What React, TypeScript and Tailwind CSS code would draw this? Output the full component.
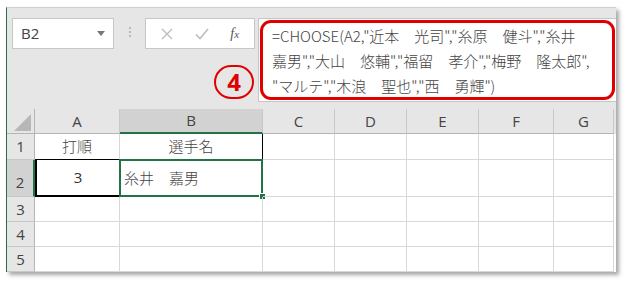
import React from "react";

const cols = ["A", "B", "C", "D", "E", "F", "G"];
const colW = ["w-[85px]", "w-[143px]", "w-[72px]", "w-[72px]", "w-[72px]", "w-[75px]", "w-[60px]"];

const jp = { fontFamily: '"Noto Sans CJK JP", "Noto Sans", sans-serif' };
const ui = { fontFamily: '"Open Sans", "Noto Sans", sans-serif' };

const NameBox = () => (
  <div className="flex items-center justify-between w-[102px] h-[31px] bg-white border border-[#c6c6c6] pl-[8px] pr-[8px]">
    <span className="text-[15px] text-[#444]" style={ui}>B2</span>
    <svg width="8" height="5" viewBox="0 0 8 5"><path d="M0 0h8L4 5z" fill="#777" /></svg>
  </div>
);

const FxBox = () => (
  <div className="flex items-center justify-around w-[110px] h-[31px] bg-white border border-[#c6c6c6] px-[4px]">
    <svg width="12" height="12" viewBox="0 0 12 12"><path d="M1 1l10 10M11 1L1 11" stroke="#bdbdbd" strokeWidth="1.4" /></svg>
    <svg width="14" height="12" viewBox="0 0 14 12"><path d="M1 6.5l4 4L13 1" stroke="#bdbdbd" strokeWidth="1.6" fill="none" /></svg>
    <span className="text-[14px] italic text-[#555]" style={{ fontFamily: '"Liberation Serif", serif' }}>
      f<span className="text-[11px]">x</span>
    </span>
  </div>
);

const Cell = ({ className = "", children }: { className?: string; children?: React.ReactNode }) => (
  <div className={`relative flex items-center border-r border-b border-[#d8d8d8] ${className}`}>{children}</div>
);

export default function App() {
  const rowH = ["h-[26px]", "h-[37px]", "h-[25px]", "h-[25px]", "h-[25px]"];
  return (
    <div className="w-[625px] h-[284px] bg-white pl-[6px] pt-[7px]">
      <div className="w-[610px] h-[265px] bg-[#e6e6e6] border-l border-l-[#2e6b46] border-t border-t-[#d0d0d0] shadow-[3px_3px_4px_rgba(0,0,0,0.35)] flex flex-col">
        {/* formula bar */}
        <div className="flex h-[100px] pt-[10px] pl-[5px]">
          <NameBox />
          <div className="w-[31px] flex justify-center pt-[9px]">
            <div className="flex flex-col gap-[2px]">
              <span className="w-[2px] h-[2px] bg-[#b8b8b8]" />
              <span className="w-[2px] h-[2px] bg-[#b8b8b8]" />
              <span className="w-[2px] h-[2px] bg-[#b8b8b8]" />
            </div>
          </div>
          <div className="flex flex-col items-end">
            <FxBox />
            <div className="mt-[16px] mr-[1px] w-[40px] h-[34px] rounded-full border-[2.5px] border-[#e00000] flex items-center justify-center text-[#e00000] text-[24px] font-bold leading-none" style={ui}>
              4
            </div>
          </div>
          <div className="ml-[3px] w-[358px] h-[84px] bg-white border border-[#c6c6c6] border-r-0 p-[1px]">
            <div className="h-full rounded-[11px] border-[3px] border-[#e00000] pl-[9px] pt-0 text-[15px] leading-[25px] text-[#444] font-light whitespace-nowrap" style={jp}>
              <div>=CHOOSE(A2,"近本　光司","糸原　健斗","糸井</div>
              <div>嘉男","大山　悠輔","福留　孝介","梅野　隆太郎",</div>
              <div>"マルテ","木浪　聖也","西　勇輝")</div>
            </div>
          </div>
        </div>

        {/* grid */}
        <div className="mt-[1px] flex flex-col text-[#444]" style={ui}>
          <div className="flex h-[25px] bg-[#e6e6e6]">
            <div className="w-[28px] border-r border-b border-[#b5b5b5] flex items-end justify-end pr-[3px] pb-[2px]">
              <svg width="17" height="17" viewBox="0 0 17 17"><path d="M17 0V17H0z" fill="#b7b7b7" /></svg>
            </div>
            {cols.map((c, i) => (
              <div
                key={c}
                className={`${colW[i]} flex items-center justify-center text-[15px] border-r border-[#c8c8c8] ${
                  c === "B" ? "bg-[#d2d2d2] border-b-2 border-b-[#217346]" : "border-b border-b-[#b5b5b5]"
                }`}
              >
                {c}
              </div>
            ))}
          </div>
          {rowH.map((h, r) => (
            <div key={r} className={`flex ${h} bg-white`}>
              <div
                className={`w-[28px] flex items-center justify-center text-[15px] border-b border-[#c8c8c8] ${
                  r === 1 ? "bg-[#d2d2d2] border-r-2 border-r-[#217346] items-end pb-[3px]" : "bg-[#e6e6e6] border-r border-r-[#b5b5b5]"
                }`}
              >
                {r + 1}
              </div>
              {cols.map((c, i) => {
                let cls = `${colW[i]} `;
                let content: React.ReactNode = null;
                if (r === 0 && c === "A") {
                  cls += "justify-center !border-b-black";
                  content = <span className="text-[15px] text-[#444] font-light" style={jp}>打順</span>;
                } else if (r === 0 && c === "B") {
                  cls += "justify-center !border-b-black !border-r-black";
                  content = <span className="text-[15px] text-[#444] font-light" style={jp}>選手名</span>;
                } else if (r === 1 && c === "A") {
                  cls += "justify-center !border-b-2 !border-b-black !border-l-2 !border-l-black";
                  content = <span className="text-[15px] text-[#333]">3</span>;
                } else if (r === 1 && c === "B") {
                  cls += "pl-[4px]";
                  content = (
                    <>
                      <span className="text-[15px] text-[#444] font-light" style={jp}>糸井　嘉男</span>
                      <div className="absolute -top-[1px] -left-[1px] right-[-1px] bottom-[-1px] border-2 border-[#217346]" />
                      <div className="absolute -right-[4px] -bottom-[4px] w-[7px] h-[7px] bg-[#217346] border border-white" />
                    </>
                  );
                }
                return (
                  <Cell key={c} className={cls}>
                    {content}
                  </Cell>
                );
              })}
            </div>
          ))}
        </div>
      </div>
    </div>
  );
}
